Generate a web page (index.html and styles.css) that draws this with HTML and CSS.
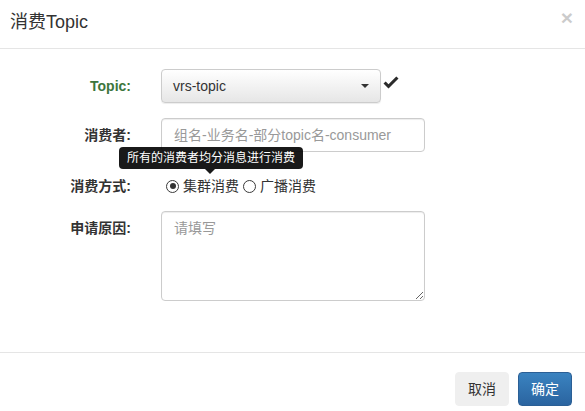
FILE: index.html
```html
<!DOCTYPE html>
<html lang="zh">
<head>
<meta charset="utf-8">
<link rel="stylesheet" href="styles.css">
</head>
<body>
<div class="modal">
  <div class="modal-header">
    <h4 class="modal-title">消费Topic</h4>
    <button class="close" type="button">×</button>
  </div>
  <div class="modal-body">
    <form class="form">
      <div class="row">
        <label class="lbl success">Topic:</label>
        <div class="ctl">
          <div class="select">
            <span>vrs-topic</span>
            <span class="caret"></span>
          </div>
          <svg class="ok" width="16" height="14" viewBox="0 0 16 14"><path d="M0.5 7.5 L5.5 12.5 L15.5 2.5 L13.3 0.4 L5.5 8.2 L2.7 5.4 Z" fill="#2b2b2b"/></svg>
        </div>
      </div>
      <div class="row">
        <label class="lbl">消费者:</label>
        <div class="ctl">
          <input class="input" type="text" placeholder="组名-业务名-部分topic名-consumer">
        </div>
      </div>
      <div class="row radios">
        <label class="lbl">消费方式:</label>
        <div class="ctl radio-ctl">
          <label class="radio"><input type="radio" name="mode" checked>集群消费</label>
          <label class="radio"><input type="radio" name="mode">广播消费</label>
          <div class="tooltip">所有的消费者均分消息进行消费<span class="arrow"></span></div>
        </div>
      </div>
      <div class="row">
        <label class="lbl">申请原因:</label>
        <div class="ctl">
          <textarea class="textarea" placeholder="请填写"></textarea>
        </div>
      </div>
    </form>
  </div>
  <div class="modal-footer">
    <button class="btn btn-default" type="button">取消</button>
    <button class="btn btn-primary" type="button">确定</button>
  </div>
</div>
</body>
</html>
```
FILE: styles.css
```css
html, body {
  margin: 0;
  padding: 0;
  background: #fff;
}
body {
  font-family: "Liberation Sans", "Noto Sans CJK SC", sans-serif;
  font-size: 14px;
  color: #333;
  line-height: 20px;
}
.modal {
  width: 585px;
  height: 411px;
  overflow: hidden;
  display: flex;
  flex-direction: column;
}
.modal-header {
  height: 48px;
  border-bottom: 1px solid #e5e5e5;
  display: flex;
  align-items: center;
  justify-content: space-between;
  padding: 0 12px 0 10px;
  flex: none;
}
.modal-title {
  margin: 0;
  font-size: 18px;
  font-weight: normal;
  line-height: 26px;
  color: #333;
  padding-bottom: 4px;
}
.close {
  border: 0;
  background: none;
  padding: 0;
  font-family: "Liberation Sans", sans-serif;
  font-size: 21px;
  font-weight: bold;
  line-height: 1;
  color: #000;
  opacity: 0.2;
  margin-bottom: 14px;
  cursor: pointer;
}
.modal-body {
  height: 303px;
  padding: 20px 0 0 0;
  box-sizing: border-box;
  flex: none;
}
.form {
  display: flex;
  flex-direction: column;
  gap: 15px;
}
.row {
  display: grid;
  grid-template-columns: 131px 264px;
  column-gap: 30px;
}
.lbl {
  text-align: right;
  font-weight: bold;
  padding-top: 7px;
  line-height: 20px;
}
.lbl.success {
  color: #3c763d;
}
.ctl {
  display: flex;
  align-items: center;
  position: relative;
}
.select {
  width: 220px;
  height: 34px;
  box-sizing: border-box;
  border: 1px solid #ccc;
  border-radius: 4px;
  background: linear-gradient(#ffffff, #e6e6e6);
  box-shadow: inset 0 1px 0 rgba(255,255,255,.15), 0 1px 1px rgba(0,0,0,.075);
  display: flex;
  align-items: center;
  justify-content: space-between;
  padding: 0 11px 0 11px;
  color: #333;
  font-size: 14px;
}
.caret {
  width: 0;
  height: 0;
  border-top: 4px solid #333;
  border-left: 4px solid transparent;
  border-right: 4px solid transparent;
}
.ok {
  margin-left: 2px;
  margin-top: -7px;
}
.input {
  width: 264px;
  height: 34px;
  box-sizing: border-box;
  border: 1px solid #ccc;
  border-radius: 4px;
  padding: 6px 12px;
  font-family: inherit;
  font-size: 14px;
  color: #555;
  box-shadow: inset 0 1px 1px rgba(0,0,0,.075);
  outline: none;
}
.input::placeholder, .textarea::placeholder {
  color: #999;
}
.radios .lbl {
  padding-top: 9px;
}
.radio-ctl {
  align-items: flex-start;
  padding-top: 9px;
  height: 20px;
  padding-left: 5px;
}
.radio {
  display: flex;
  align-items: center;
  margin-right: 4px;
  line-height: 20px;
  cursor: pointer;
}
.radio input {
  appearance: none;
  -webkit-appearance: none;
  margin: 0 4px 0 0;
  width: 13px;
  height: 13px;
  box-sizing: border-box;
  border: 1px solid #3a3a3a;
  border-radius: 50%;
  background: #fff;
  position: relative;
}
.radio input:checked::after {
  content: "";
  position: absolute;
  left: 2.5px;
  top: 2.5px;
  width: 6px;
  height: 6px;
  border-radius: 50%;
  background: #333;
}
.tooltip {
  position: absolute;
  left: -42px;
  top: -20px;
  background: rgba(0,0,0,.9);
  color: #fff;
  font-size: 12px;
  line-height: 16px;
  padding: 3px 8px;
  border-radius: 4px;
  white-space: nowrap;
}
.tooltip .arrow {
  position: absolute;
  left: 86px;
  bottom: -5px;
  width: 0;
  height: 0;
  border-top: 5px solid rgba(0,0,0,.9);
  border-left: 5px solid transparent;
  border-right: 5px solid transparent;
}
.textarea {
  width: 264px;
  height: 90px;
  box-sizing: border-box;
  border: 1px solid #ccc;
  border-radius: 4px;
  padding: 6px 12px;
  font-family: inherit;
  font-size: 14px;
  line-height: 20px;
  color: #555;
  box-shadow: inset 0 1px 1px rgba(0,0,0,.075);
  outline: none;
  resize: vertical;
  display: block;
}
.modal-footer {
  border-top: 1px solid #e5e5e5;
  display: flex;
  justify-content: flex-end;
  gap: 9px;
  padding: 19px 13px 0 0;
  flex: none;
}
.btn {
  height: 34px;
  box-sizing: border-box;
  padding: 6px 12px;
  font-family: inherit;
  font-size: 14px;
  line-height: 20px;
  border-radius: 4px;
  cursor: pointer;
  width: 54px;
}
.btn-default {
  background: #efefef;
  border: 1px solid #efefef;
  color: #333;
}
.btn-primary {
  background: linear-gradient(#3a83c0, #2a64a0);
  border: 1px solid #2b5f95;
  color: #fff;
}
```
